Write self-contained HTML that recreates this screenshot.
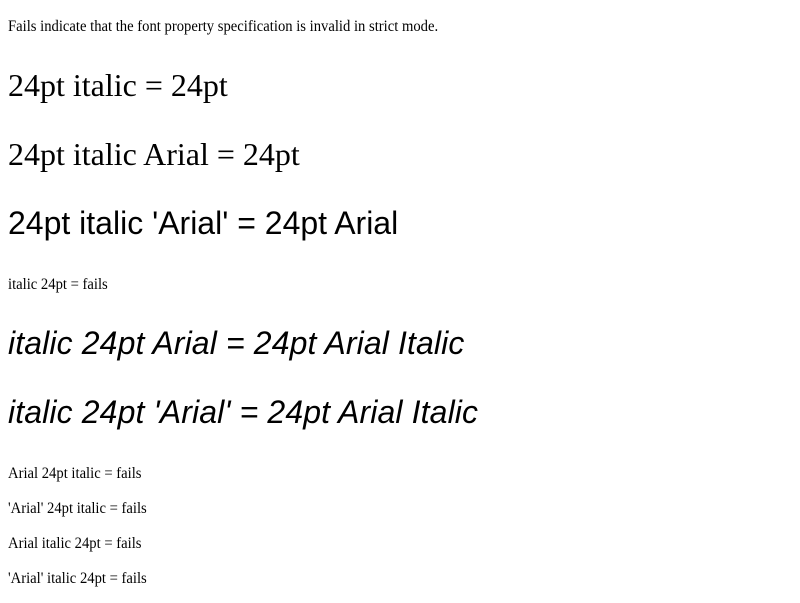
<!DOCTYPE html>
<html><head><style>
body{margin:8px;background:#fff;color:#000;font-family:"Liberation Serif",serif;}
p{margin:16px 0;font-size:16px;line-height:19px;white-space:nowrap}
p.s span{display:inline-block;transform:scaleX(0.915);transform-origin:0 0;position:relative;top:1px}
p.b{font-size:32px;line-height:37px;margin:32px 0}
.a{font-family:"Liberation Sans",sans-serif}
.i{font-style:italic;letter-spacing:0.12px}
</style></head><body>
<p class="s"><span>Fails indicate that the font property specification is invalid in strict mode.</span></p>
<p class="b">24pt italic = 24pt</p>
<p class="b">24pt italic Arial = 24pt</p>
<p class="b a">24pt italic 'Arial' = 24pt Arial</p>
<p class="s"><span>italic 24pt = fails</span></p>
<p class="b a i">italic 24pt Arial = 24pt Arial Italic</p>
<p class="b a i">italic 24pt 'Arial' = 24pt Arial Italic</p>
<p class="s"><span>Arial 24pt italic = fails</span></p>
<p class="s"><span>'Arial' 24pt italic = fails</span></p>
<p class="s"><span>Arial italic 24pt = fails</span></p>
<p class="s"><span>'Arial' italic 24pt = fails</span></p>
</body></html>
